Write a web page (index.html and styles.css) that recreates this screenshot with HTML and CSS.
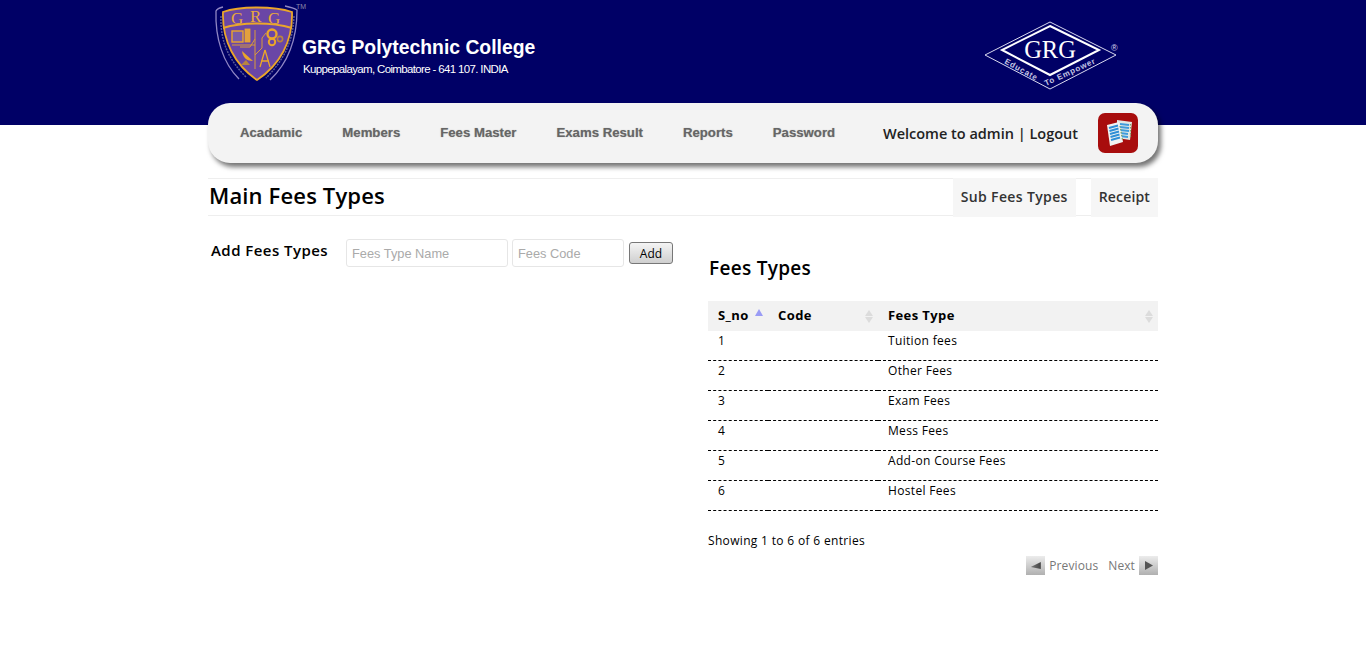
FILE: index.html
```html
<!DOCTYPE html>
<html lang="en">
<head>
<meta charset="utf-8">
<title>GRG Polytechnic College</title>
<link rel="stylesheet" href="styles.css">
</head>
<body>
<div class="page">
  <header class="brand">
    <div class="college">
      <svg class="crest" width="92" height="84" viewBox="0 0 92 84" aria-hidden="true">
        <path d="M11 4 C7 5 5 6 4 8 C3 35 11 60 27 76" fill="none" stroke="#8f86c4" stroke-width="1.3"/>
        <path d="M73 3 C78 4 82 5 85 7 C85 35 76 60 58 77" fill="none" stroke="#8f86c4" stroke-width="1.3"/>
        <path d="M9 13 C8 40 18 58 34 74 M82 13 C81 40 71 58 54 75" fill="none" stroke="#5a5a96" stroke-width="1.5" stroke-dasharray="2 1"/>
        <path d="M11 9 C28 3 62 3 80 9 C81 38 68 62 45 77 C23 62 10 38 11 9Z" fill="#6a46a6" stroke="#eba62a" stroke-width="1.8"/>
        <path d="M11 25 C30 19 60 19 80 25" fill="none" stroke="#eba62a" stroke-width="2"/>
        <text x="19" y="21" class="crest-letter">G</text>
        <text x="38" y="19" class="crest-letter">R</text>
        <text x="56" y="21" class="crest-letter">G</text>
        <rect x="20" y="28" width="11" height="11" fill="#7b5ca8" stroke="#eba62a" stroke-width="1.4"/>
        <rect x="33" y="26" width="5" height="13" fill="#e0a040" stroke="#eba62a" stroke-width=".8"/>
        <path d="M43 27 V66 M43 42 H20 M43 52 L50 45 V35 L54 30 M43 36 L38 44 H28" fill="none" stroke="#d99a3a" stroke-width="1"/>
        <circle cx="60" cy="31" r="4.5" fill="none" stroke="#eba62a" stroke-width="2.4"/>
        <circle cx="60" cy="39" r="3.2" fill="none" stroke="#eba62a" stroke-width="2"/>
        <circle cx="68" cy="36" r="2.6" fill="none" stroke="#b98440" stroke-width="1.6"/>
        <path d="M30 48 C31 55 35 58 41 58Z" fill="#eba62a"/>
        <path d="M34 57 L29 62 H38Z" fill="#b98440"/>
        <path d="M53 47 L48 64 M53 47 L58 64 M49 58 H57" fill="none" stroke="#eba62a" stroke-width="1.3"/>
      </svg>
      <span class="tm">TM</span>
      <div class="college-text">
        <div class="college-name">GRG Polytechnic College</div>
        <div class="college-addr">Kuppepalayam, Coimbatore - 641 107. INDIA</div>
      </div>
    </div>
    <svg class="motto" width="136" height="72" viewBox="0 0 136 72" aria-hidden="true">
      <path d="M66 2 L132 35 L66 69 L1 35Z" fill="none" stroke="#d8d8ee" stroke-width="1"/>
      <path d="M66 6 L115 30 L66 55 L18 30Z" fill="none" stroke="#fff" stroke-width="2"/>
      <text x="66" y="38" text-anchor="middle" class="motto-grg">GRG</text>
      <path id="mottoLeft" d="M20 43 L58 64" fill="none"/>
      <path id="mottoRight" d="M62 66 L114 42" fill="none"/>
      <text class="motto-line"><textPath href="#mottoLeft">Educate</textPath></text>
      <text class="motto-line"><textPath href="#mottoRight">To Empower</textPath></text>
      <text x="127" y="31" class="motto-reg">®</text>
    </svg>
  </header>

  <nav class="menu">
    <ul class="menu-links">
      <li>Acadamic</li>
      <li>Members</li>
      <li>Fees Master</li>
      <li>Exams Result</li>
      <li>Reports</li>
      <li>Password</li>
    </ul>
    <div class="welcome">Welcome to admin | Logout</div>
    <div class="app-icon">
      <svg width="40" height="40" viewBox="0 0 40 40" aria-hidden="true">
        <path d="M19 7 L34 9 L32 27 L19 25Z" fill="#e3e8e4"/>
        <path d="M22 11 L31 12 M22 14 L31 15 M22 17 L31 18 M22 20 L30 21 M22 23 L30 24" stroke="#3f9bdc" stroke-width="1.8"/>
        <path d="M32.5 11 V24" stroke="#7fa86a" stroke-width="1.2" stroke-dasharray="1.5 1.5"/>
        <path d="M9 12 L21 9 L25 29 L12 33Z" fill="#f2f4f2"/>
        <path d="M11 15 L20 12.5 M11.5 18 L20.5 15.5 M12 21 L21 18.5 M12.5 24 L21.5 21.5 M13 27 L22 24.5" stroke="#2f8fd6" stroke-width="2"/>
        <path d="M22 13 L24.5 27" stroke="#7fa86a" stroke-width="1.2" stroke-dasharray="1.5 1.5"/>
      </svg>
    </div>
  </nav>

  <div class="title-bar">
    <h1 class="page-title">Main Fees Types</h1>
    <div class="tabs">
      <a class="tab tab-sub">Sub Fees Types</a>
      <a class="tab">Receipt</a>
    </div>
  </div>

  <main class="content">
    <section class="add-form">
      <h3 class="form-title">Add Fees Types</h3>
      <input class="field field-name" type="text" placeholder="Fees Type Name">
      <input class="field field-code" type="text" placeholder="Fees Code">
      <button class="add-btn" type="button">Add</button>
    </section>

    <section class="list">
      <h2 class="list-title">Fees Types</h2>
      <table class="grid">
        <thead>
          <tr>
            <th class="col-sno"><span class="th-text">S_no</span><span class="sort-asc"></span></th>
            <th class="col-code"><span class="th-text">Code</span><span class="sort-both"></span></th>
            <th class="col-type"><span class="th-text">Fees Type</span><span class="sort-both"></span></th>
          </tr>
        </thead>
        <tbody>
          <tr><td>1</td><td></td><td>Tuition fees</td></tr>
          <tr><td>2</td><td></td><td>Other Fees</td></tr>
          <tr><td>3</td><td></td><td>Exam Fees</td></tr>
          <tr><td>4</td><td></td><td>Mess Fees</td></tr>
          <tr><td>5</td><td></td><td>Add-on Course Fees</td></tr>
          <tr><td>6</td><td></td><td>Hostel Fees</td></tr>
        </tbody>
      </table>
      <div class="info">Showing 1 to 6 of 6 entries</div>
      <div class="pager">
        <span class="pg-btn"><span class="arrow-left"></span></span>
        <span class="pg-label pg-prev">Previous</span>
        <span class="pg-label pg-next">Next</span>
        <span class="pg-btn"><span class="arrow-right"></span></span>
      </div>
    </section>
  </main>
</div>
</body>
</html>
```

FILE: styles.css
```css
* { box-sizing: border-box; }
html, body { margin: 0; padding: 0; }
body {
  height: 657px;
  overflow: hidden;
  background: linear-gradient(#000066, #000066) top left / 100% 125px no-repeat #fff;
  font-family: "Open Sans", "Liberation Sans", sans-serif;
  color: #000;
}
.page { width: 950px; margin: 0 auto; }

/* brand */
.brand {
  height: 103px;
  display: flex;
  justify-content: space-between;
  position: relative;
}
.college { display: flex; position: relative; }
.crest { margin: 3px 0 0 4px; flex: none; }
.tm { position: absolute; left: 88px; top: 3px; font: 7px "Liberation Sans", sans-serif; color: #8a8aa8; }
.crest-letter { font: 17px "Liberation Serif", serif; fill: #e8a93a; }
.college-text { margin: 36px 0 0 -2px; color: #fff; font-family: "Liberation Sans", Arial, sans-serif; }
.college-name { font-size: 19.35px; font-weight: bold; line-height: 23px; }
.college-addr { font-size: 11.5px; line-height: 14px; margin: 3px 0 0 1px; letter-spacing: -.65px; }
.motto { margin: 20px 38px 0 0; }
.motto-grg { font: 24.5px "Liberation Serif", serif; fill: #fff; }
.motto-line { font: bold 8px "Liberation Sans", sans-serif; fill: #c6c6e4; letter-spacing: .8px; }
.motto-reg { font: 9px "Liberation Sans", sans-serif; fill: #d8d8ee; }

/* menu */
.menu {
  height: 60px;
  background: #f3f3f3;
  border-radius: 22px;
  box-shadow: 3px 4px 5px rgba(0, 0, 0, .55);
  display: flex;
  align-items: center;
  padding: 0 20px 0 32px;
}
.menu-links {
  list-style: none;
  margin: 0 0 2px;
  padding: 0;
  display: flex;
  gap: 40px;
  font: bold 13.2px "Liberation Sans", Arial, sans-serif;
  color: #666;
  text-shadow: 0 0 1px rgba(90, 90, 90, .5);
}
.welcome { margin-left: auto; font-size: 14.5px; font-weight: 600; color: #222; }
.app-icon {
  width: 40px;
  height: 40px;
  margin-left: 20px;
  background: #a80d0d;
  border-radius: 7px;
}
.app-icon svg { display: block; }

/* title bar */
.title-bar {
  margin-top: 15px;
  height: 38px;
  border-top: 1px solid #eee;
  border-bottom: 1px solid #eee;
  display: flex;
  justify-content: space-between;
  align-items: stretch;
}
.page-title { margin: 0 0 0 1px; font-size: 22px; font-weight: 600; line-height: 33px; letter-spacing: .15px; }
.tabs { display: flex; gap: 15px; margin: -1px 0 -2px; }
.tab {
  background: #f6f6f6;
  font-size: 14px;
  font-weight: 600;
  color: #333;
  line-height: 37px;
  padding: 0 8px;
  letter-spacing: .15px;
}
.tab-sub { letter-spacing: .36px; }

/* content */
.content { display: flex; }
.add-form { width: 500px; flex: none; display: flex; align-items: flex-start; padding-top: 22px; }
.form-title { margin: 0 17px 0 3px; font-size: 15px; font-weight: 600; line-height: 24px; width: 118px; white-space: nowrap; letter-spacing: .45px; }
.field {
  height: 28px;
  margin: 1px 4px 0 0;
  padding: 0 5px;
  border: 1px solid #e6e6e6;
  border-radius: 3px;
  background: #fff;
  font: 12.8px "Liberation Sans", sans-serif;
}
.field::placeholder { color: #aaa; opacity: 1; }
.field-name { width: 162px; }
.field-code { width: 112px; }
.add-btn {
  margin: 4px 0 0 1px;
  width: 44px;
  height: 22px;
  padding: 0;
  border: 1px solid #777;
  border-radius: 3px;
  background: linear-gradient(#f4f4f4, #cfcfcf);
  font: 12px "Open Sans", sans-serif;
  color: #000;
}
.list { width: 450px; }
.list-title { margin: 39px 0 20px 1px; font-size: 19px; font-weight: 600; line-height: 26px; letter-spacing: .3px; }
.grid { width: 450px; border-collapse: separate; border-spacing: 0; table-layout: fixed; font-size: 12px; letter-spacing: .33px; }
.grid th {
  height: 30px;
  background: #f2f2f2;
  text-align: left;
  padding: 0 10px 2px;
  font-size: 13px;
  font-weight: 700;
  letter-spacing: .4px;
  position: relative;
}
.col-sno { width: 60px; }
.col-code { width: 110px; }
.grid td {
  height: 30px;
  padding: 0 10px 10px;
  line-height: 19px;
  border-bottom: 1px dashed #000;
}
.sort-asc, .sort-both { position: absolute; right: 4px; top: 8px; width: 9px; height: 14px; }
.sort-asc::before {
  content: "";
  position: absolute;
  left: 0;
  top: 0;
  border: 4.5px solid transparent;
  border-top: 0;
  border-bottom: 7px solid #9a9cf5;
}
.sort-both::before, .sort-both::after {
  content: "";
  position: absolute;
  left: 0;
  border: 4.5px solid transparent;
}
.sort-both::before { top: 1px; border-top: 0; border-bottom: 6px solid #dcdcdc; }
.sort-both::after { top: 8px; border-bottom: 0; border-top: 6px solid #dcdcdc; }
.info { font-size: 12px; line-height: 18px; margin-top: 21px; letter-spacing: .33px; }
.pager { display: flex; justify-content: flex-end; align-items: center; margin-top: 6px; height: 19px; font-size: 12px; color: #777; letter-spacing: .1px; }
.pg-label { line-height: 19px; }
.pg-prev { margin: 0 10px 0 4px; }
.pg-next { margin-right: 4px; }
.pg-btn {
  width: 19px;
  height: 19px;
  background: linear-gradient(#ececec, #b0b0b0);
  display: flex;
  align-items: center;
  justify-content: center;
}
.arrow-left { width: 10px; height: 7px; background: linear-gradient(90deg, #777, #444); clip-path: polygon(0 70%, 100% 0, 100% 100%); }
.arrow-right { width: 8px; height: 9px; margin-left: 1px; background: #555; clip-path: polygon(0 0, 100% 50%, 0 100%); }
```
